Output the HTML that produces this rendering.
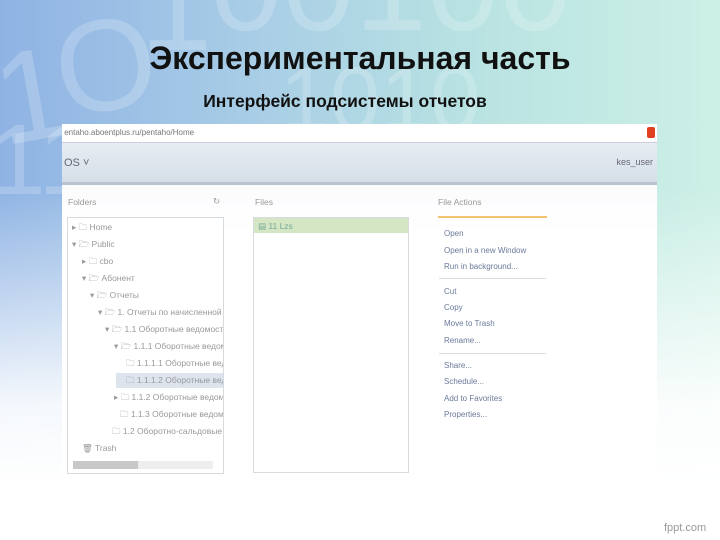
<!DOCTYPE html>
<html><head><meta charset="utf-8"><style>
body{margin:0;width:720px;height:540px;overflow:hidden;position:relative;font-family:"Liberation Sans","DejaVu Sans",sans-serif;
background:linear-gradient(180deg,rgba(255,255,255,0) 0%,rgba(255,255,255,0) 35%,rgba(255,255,255,.9) 75%,#fff 90%),linear-gradient(90deg,#8fb3e4 0%,#a8cde6 35%,#b8e2e2 65%,#cdf0e6 100%);}
.big{position:absolute;color:rgba(255,255,255,.2);font-size:130px;font-family:"Liberation Sans",sans-serif;line-height:1}
h1{position:absolute;left:0;width:720px;top:40px;margin:0;text-align:center;font-size:32px;font-weight:bold;color:#111}
h2{position:absolute;left:0;width:690px;top:91px;margin:0;text-align:center;font-size:17.5px;font-weight:bold;color:#111}
.shot{position:absolute;left:62px;top:124px;width:595px;height:360px;background:linear-gradient(#f4f6f9,#fff 30%);}
.url{position:absolute;left:0;top:0;width:595px;height:18px;background:#fff;border-bottom:1px solid #ccd;font-size:8px;color:#777;line-height:18px}
.hdr{position:absolute;left:0;top:19px;width:595px;height:39px;background:linear-gradient(#e8edf3,#d5dee8);border-bottom:3px solid #b9c3cf;font-size:11px;color:#667;}
.t{position:absolute;font-size:8.5px;color:#999;white-space:nowrap}
.box{position:absolute;border:1px solid #d6dbe0;background:#fff;overflow:hidden}
.a{position:absolute;left:444px;font-size:8px;color:#6a7a9a}
.sep{position:absolute;left:439px;width:107px;height:1px;background:#ddd}
</style></head><body>
<div class="big" style="left:-5px;top:30px;transform:rotate(-10deg)">1</div>
<div class="big" style="left:55px;top:0px;transform:rotate(-10deg)">O</div>
<div class="big" style="left:140px;top:-60px">1</div>
<div class="big" style="left:210px;top:-80px">00100</div>
<div class="big" style="left:-10px;top:110px;font-size:100px">110</div>
<div class="big" style="left:280px;top:55px;font-size:90px">1010</div>
<h1>Экспериментальная часть</h1>
<h2>Интерфейс подсистемы отчетов</h2>
<div class="shot">
 <div class="url">&nbsp;entaho.aboentplus.ru/pentaho/Home<span style="position:absolute;right:2px;top:3px;width:8px;height:11px;background:#e04020;border-radius:2px"></span></div>
 <div class="hdr"><span style="position:absolute;left:2px;top:14px">ОS ˅</span><span style="position:absolute;right:4px;top:14px;font-size:9px">kes_user</span></div>
</div>
<div class="t" style="left:68px;top:197px">Folders</div>
<div class="t" style="left:213px;top:196px">↻</div>
<div class="t" style="left:255px;top:197px">Files</div>
<div class="t" style="left:438px;top:197px">File Actions</div>
<div style="position:absolute;left:438px;top:216px;width:109px;height:2px;background:#f2c470"></div>
<div class="box" style="left:67px;top:217px;width:155px;height:255px">
 <div style="position:absolute;left:48px;top:155px;width:107px;height:15px;background:#dde4ee"></div>
 <div class="t" style="left:4px;top:4px">▸ 🗀 Home</div>
 <div class="t" style="left:4px;top:21px">▾ 🗁 Public</div>
 <div class="t" style="left:14px;top:38px">▸ 🗀 cbo</div>
 <div class="t" style="left:14px;top:55px">▾ 🗁 Абонент</div>
 <div class="t" style="left:22px;top:72px">▾ 🗁 Отчеты</div>
 <div class="t" style="left:30px;top:89px">▾ 🗁 1. Отчеты по начисленной к</div>
 <div class="t" style="left:37px;top:106px">▾ 🗁 1.1 Оборотные ведомости</div>
 <div class="t" style="left:46px;top:123px">▾ 🗁 1.1.1 Оборотные ведом</div>
 <div class="t" style="left:58px;top:140px">🗀 1.1.1.1 Оборотные вед</div>
 <div class="t" style="left:58px;top:157px">🗀 1.1.1.2 Оборотные вед</div>
 <div class="t" style="left:46px;top:174px">▸ 🗀 1.1.2 Оборотные ведом</div>
 <div class="t" style="left:52px;top:191px">🗀 1.1.3 Оборотные ведом</div>
 <div class="t" style="left:44px;top:208px">🗀 1.2 Оборотно-сальдовые</div>
 <div class="t" style="left:14px;top:225px">🗑 Trash</div>
 <div style="position:absolute;left:5px;top:243px;width:140px;height:8px;background:#eee"><div style="width:65px;height:8px;background:#c8c8c8"></div></div>
</div>
<div class="box" style="left:253px;top:217px;width:154px;height:254px">
 <div style="position:absolute;left:0;top:0;width:154px;height:15px;background:#d4e6c4"></div>
 <div class="t" style="left:4px;top:3px;color:#7a9">▤ 11 Lzs</div>
</div>
<div class="a" style="top:229px">Open</div>
<div class="a" style="top:246px">Open in a new Window</div>
<div class="a" style="top:262px">Run in background...</div>
<div class="sep" style="top:278px"></div>
<div class="a" style="top:287px">Cut</div>
<div class="a" style="top:303px">Copy</div>
<div class="a" style="top:319px">Move to Trash</div>
<div class="a" style="top:336px">Rename...</div>
<div class="sep" style="top:353px"></div>
<div class="a" style="top:361px">Share...</div>
<div class="a" style="top:377px">Schedule...</div>
<div class="a" style="top:394px">Add to Favorites</div>
<div class="a" style="top:410px">Properties...</div>
<div style="position:absolute;left:664px;top:522px;font-size:11px;color:#999">fppt.com</div>
</body></html>
